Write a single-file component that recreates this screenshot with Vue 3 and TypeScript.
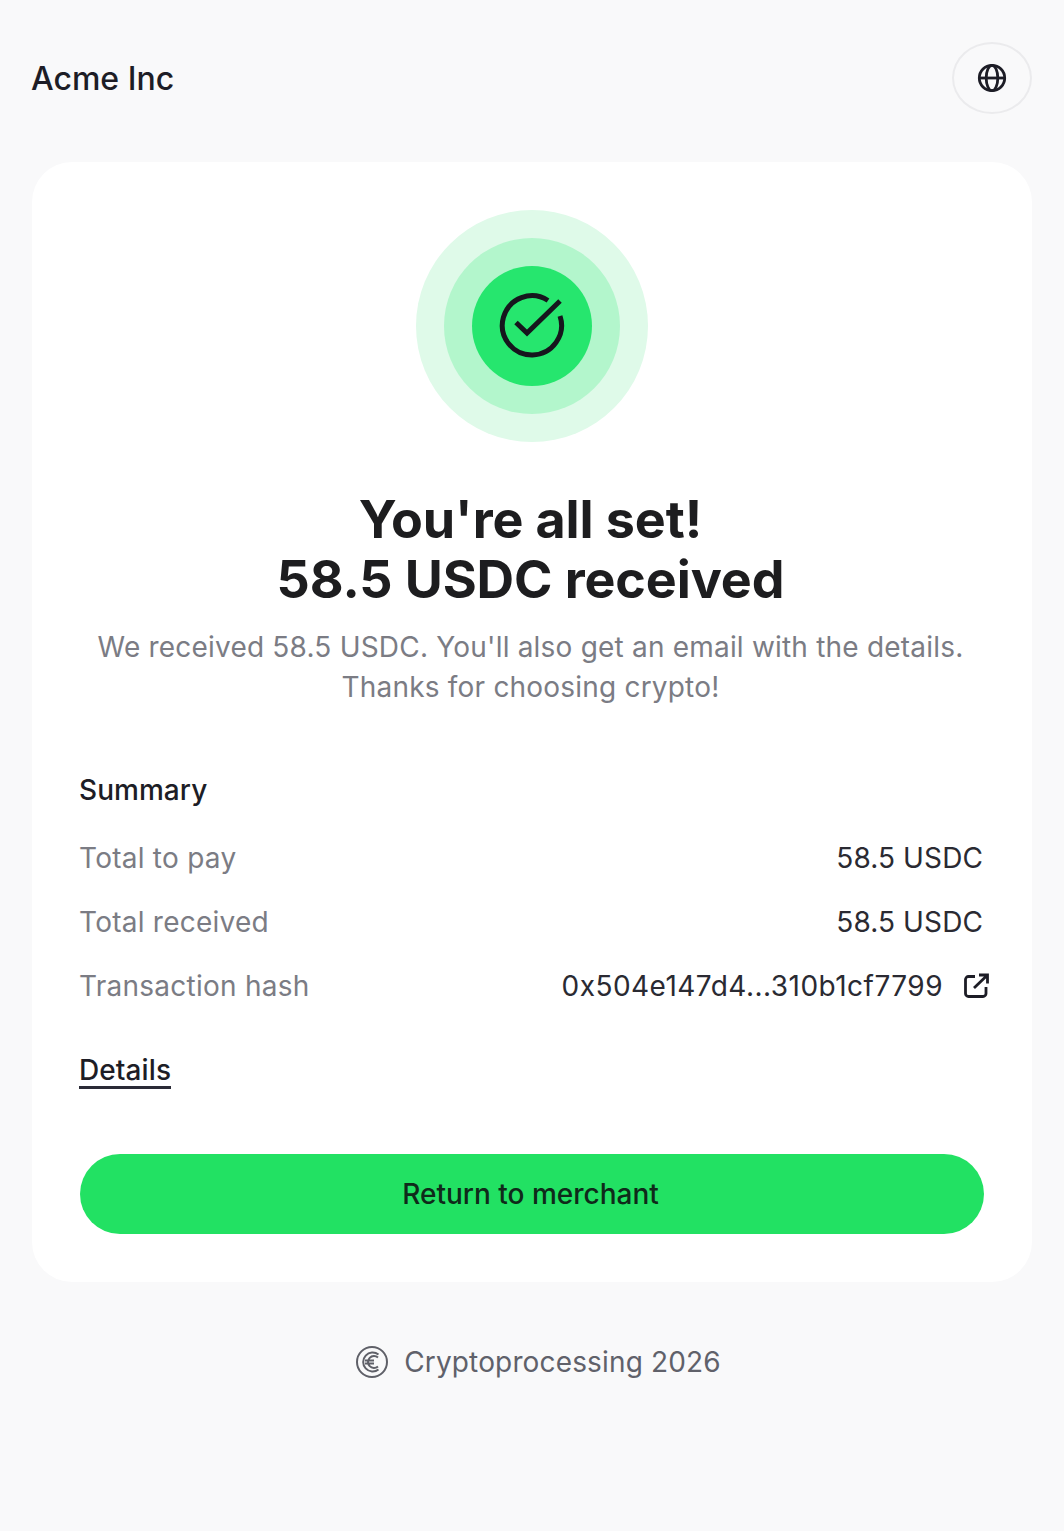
<template>
  <div class="page">
    <header class="top">
      <span class="brand">Acme Inc</span>
      <button class="lang" type="button" aria-label="Language">
        <svg width="32" height="32" viewBox="0 0 32 32" fill="none" stroke="#1d1d26" stroke-width="2.8">
          <circle cx="16" cy="16" r="12.7" />
          <ellipse cx="16" cy="16" rx="5.8" ry="12.7" />
          <path d="M3.3 16h25.4" />
        </svg>
      </button>
    </header>

    <main class="card">
      <div class="ring outer">
        <div class="ring middle">
          <div class="ring inner">
            <svg width="68" height="68" viewBox="0 0 68 68" fill="none" stroke="#16161d" stroke-width="5">
              <path d="M62 24A29.6 29.6 0 1 1 50 8.5" />
              <path d="M18 30.5 29 41 62 9" />
            </svg>
          </div>
        </div>
      </div>

      <h1 class="title">You're all set!<br />{{ amount }} received</h1>
      <p class="sub">
        We received {{ amount }}. You'll also get an email with the details.<br />
        Thanks for choosing crypto!
      </p>

      <section class="summary">
        <h2 class="summary-title">Summary</h2>
        <div v-for="row in rows" :key="row.label" class="row">
          <span class="label">{{ row.label }}</span>
          <span class="value" :class="{ hash: row.link }">
            {{ row.value }}
            <svg v-if="row.link" class="ext" width="28" height="28" viewBox="0 0 28 28" fill="none" stroke="#1d1d26" stroke-width="2.8">
              <path d="M13 4.5H6.5a3 3 0 0 0-3 3v14a3 3 0 0 0 3 3h14.5a3 3 0 0 0 3-3V15" />
              <path d="M12 16 25 3.5M17 3h8.5v8.5" />
            </svg>
          </span>
        </div>
      </section>

      <a class="details" href="#">Details</a>

      <button class="cta" type="button">Return to merchant</button>
    </main>

    <footer class="foot">
      <svg width="34" height="34" viewBox="0 0 34 34" fill="none" stroke="#5f6068" stroke-width="2">
        <circle cx="17" cy="17" r="15" />
        <path d="M23.5 9.5a9.5 9.5 0 1 0 0 15" />
        <path d="M23 12.5a6 6 0 1 0 0 9M10 15.5h9M10 18.5h9" />
      </svg>
      <span>Cryptoprocessing 2026</span>
    </footer>
  </div>
</template>

<script setup lang="ts">
interface Row {
  label: string
  value: string
  link?: boolean
}

const amount = '58.5 USDC'

const rows: Row[] = [
  { label: 'Total to pay', value: amount },
  { label: 'Total received', value: amount },
  { label: 'Transaction hash', value: '0x504e147d4...310b1cf7799', link: true },
]
</script>

<style>
html,
body {
  background: #f9f9fa;
}
</style>

<style scoped>
.page {
  height: 1531px;
  padding: 42px 32px 0;
  box-sizing: border-box;
  font-family: Inter, "Liberation Sans", sans-serif;
  background: #f9f9fa;
  color: #1d1d26;
}
.top {
  display: flex;
  justify-content: space-between;
  align-items: center;
  height: 72px;
}
.brand {
  font-size: 32px;
  font-weight: 500;
  margin-left: -1px;
}
.lang {
  width: 80px;
  height: 72px;
  padding: 0;
  display: flex;
  align-items: center;
  justify-content: center;
  border: 2px solid #ebebed;
  border-radius: 50%;
  background: transparent;
}
.card {
  margin-top: 48px;
  height: 1120px;
  box-sizing: border-box;
  padding: 48px;
  background: #fff;
  border-radius: 40px;
  display: flex;
  flex-direction: column;
  align-items: center;
}
.ring {
  border-radius: 50%;
  display: flex;
  align-items: center;
  justify-content: center;
  flex: none;
}
.outer {
  width: 232px;
  height: 232px;
  background: #dffae9;
}
.middle {
  width: 176px;
  height: 176px;
  background: #b3f6cc;
}
.inner {
  width: 120px;
  height: 120px;
  background: #26e66e;
}
.title {
  margin: 48px 0 0 -3px;
  font-size: 52px;
  line-height: 60px;
  font-weight: 700;
  letter-spacing: -0.1px;
  text-align: center;
  color: #1d1d1f;
}
.sub {
  margin: 17px 0 0 -3px;
  font-size: 28px;
  line-height: 40px;
  letter-spacing: 0.2px;
  text-align: center;
  color: #7b7c84;
}
.summary {
  align-self: stretch;
  margin-top: 63px;
}
.summary-title {
  margin: 0 0 28px -1px;
  font-size: 28px;
  line-height: 40px;
  font-weight: 500;
  letter-spacing: 0.05px;
}
.row {
  display: flex;
  justify-content: space-between;
  align-items: center;
  height: 40px;
  margin-bottom: 24px;
  font-size: 28px;
}
.label {
  margin-left: -1px;
  letter-spacing: 0.25px;
  color: #7b7c84;
}
.value {
  display: flex;
  align-items: center;
  margin-right: 1px;
  color: #2a2a32;
  letter-spacing: 0.1px;
}
.hash {
  margin-right: 0;
  letter-spacing: 0.47px;
}
.ext {
  margin-left: 19px;
  margin-right: -6px;
}
.details {
  align-self: flex-start;
  margin: 24px 0 0 -1px;
  font-size: 28px;
  line-height: 32px;
  font-weight: 500;
  letter-spacing: 0.1px;
  color: #1d1d26;
  text-decoration: none;
  border-bottom: 3px solid #2a2a36;
}
.cta {
  align-self: stretch;
  margin-top: 65px;
  height: 80px;
  padding: 0 3px 0 0;
  flex: none;
  border: 0;
  border-radius: 40px;
  background: #22e163;
  color: #0f2a1a;
  font-family: inherit;
  font-size: 28px;
  font-weight: 500;
}
.foot {
  margin-top: 60px;
  padding-left: 12px;
  display: flex;
  justify-content: center;
  align-items: center;
  gap: 15px;
  font-size: 28px;
  line-height: 40px;
  letter-spacing: 0.15px;
  color: #60616a;
}
</style>
